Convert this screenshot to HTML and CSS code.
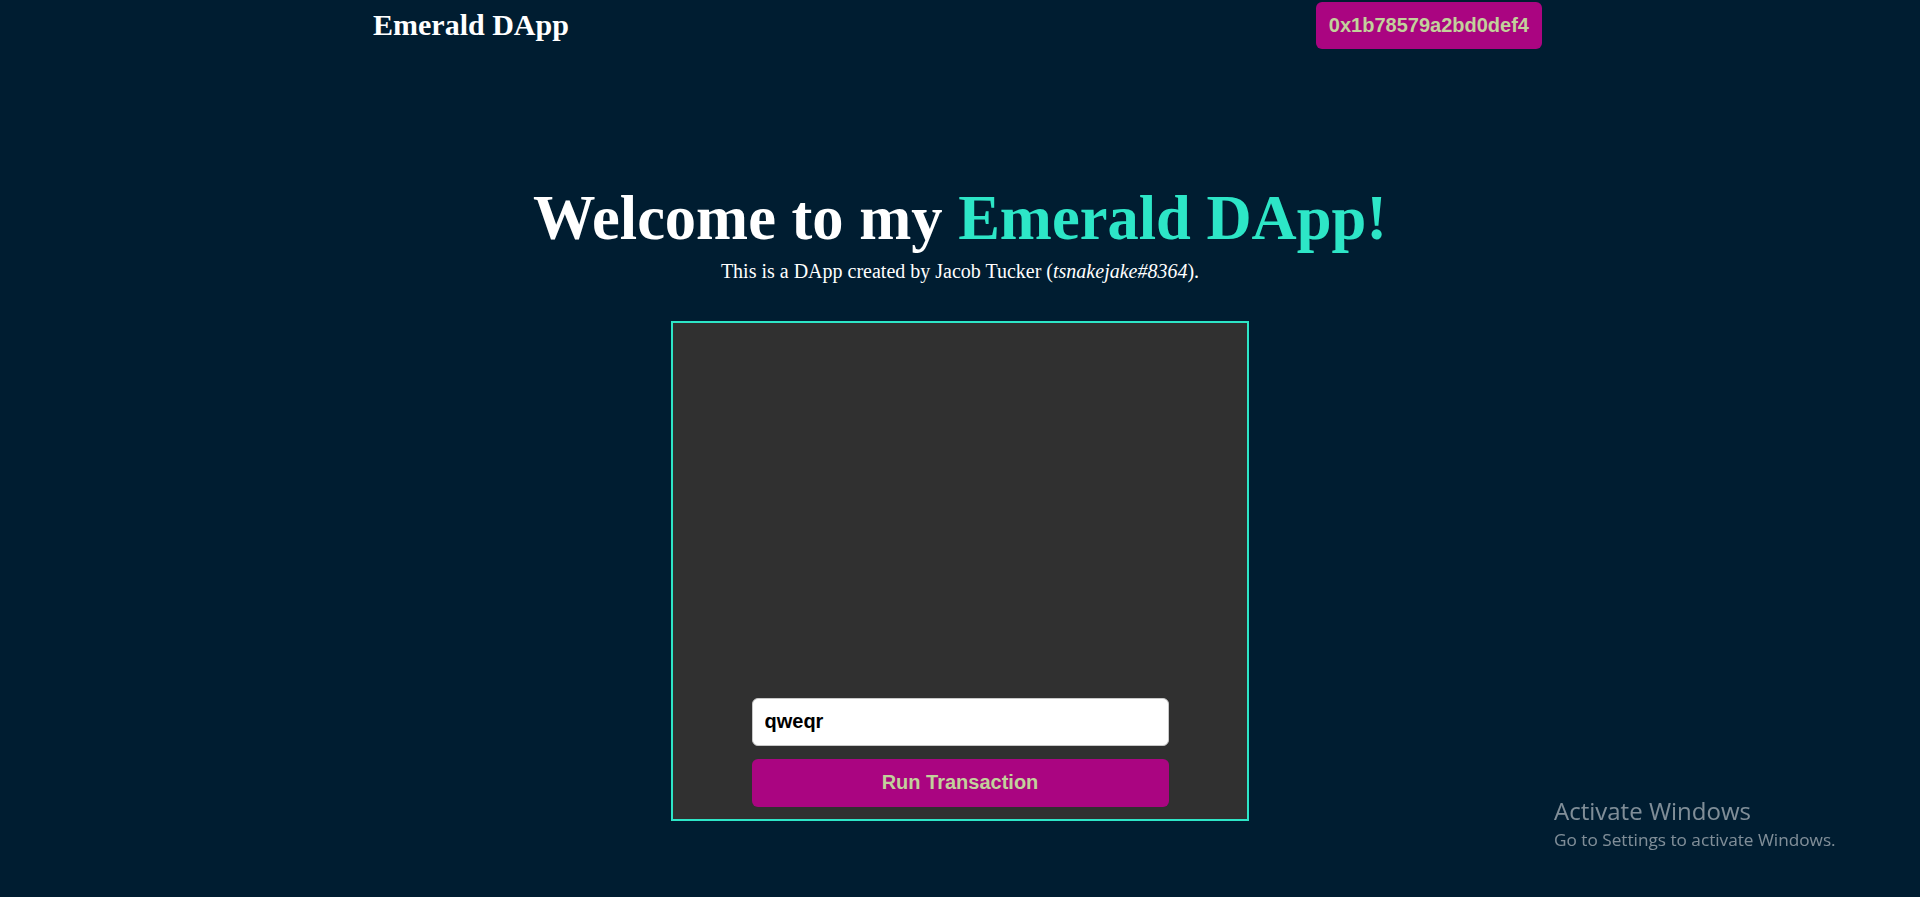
FILE: index.html
```html
<!DOCTYPE html>
<html lang="en">
<head>
<meta charset="utf-8">
<title>Emerald DApp</title>
<link rel="stylesheet" href="styles.css">
</head>
<body>
  <nav class="nav">
    <h1 class="brand">Emerald DApp</h1>
    <button class="address">0x1b78579a2bd0def4</button>
  </nav>
  <main class="main">
    <h1 class="title">Welcome to my <span class="accent">Emerald DApp!</span></h1>
    <p class="subtitle">This is a DApp created by Jacob Tucker (<i>tsnakejake#8364</i>).</p>
    <section class="card">
      <input class="field" type="text" value="qweqr">
      <button class="run">Run Transaction</button>
    </section>
  </main>
  <div class="watermark">
    <div class="wm-title">Activate Windows</div>
    <div class="wm-sub">Go to Settings to activate Windows.</div>
  </div>
</body>
</html>
```

FILE: styles.css
```css
html, body {
  margin: 0;
  padding: 0;
  background: #001d31;
  height: 100%;
  overflow: hidden;
}

body {
  font-family: "Liberation Serif", "Times New Roman", serif;
  color: #ffffff;
}

.nav {
  width: 1170px;
  margin: 0 auto;
  padding-top: 2px;
  display: flex;
  justify-content: space-between;
  align-items: center;
  box-sizing: border-box;
  padding-right: 3px;
}

.brand {
  margin: 0 0 0 -2px;
  font-size: 30px;
  line-height: 1.15;
  font-weight: bold;
  color: #ffffff;
}

.address {
  font-family: "Liberation Sans", Arial, sans-serif;
  font-weight: bold;
  font-size: 20px;
  line-height: 23px;
  padding: 12px 13px;
  border: none;
  border-radius: 6px;
  background: #aa0581;
  color: #c2d19b;
}

.main {
  padding-top: 134px;
  display: flex;
  flex-direction: column;
  align-items: center;
}

.title {
  margin: 0;
  font-size: 62.5px;
  line-height: 1.15;
  font-weight: bold;
  text-align: center;
}

.accent {
  color: #2de6c7;
}

.subtitle {
  margin: 5px 0 0;
  font-size: 20px;
  line-height: 1.15;
  text-align: center;
}

.card {
  margin-top: 38px;
  width: 578px;
  height: 500px;
  box-sizing: border-box;
  border: 2px solid #2de6c7;
  background: #303030;
  display: flex;
  flex-direction: column;
  justify-content: flex-end;
  align-items: center;
  padding-bottom: 12px;
}

.field {
  width: 417px;
  height: 48px;
  box-sizing: border-box;
  border: 1px solid #c8c8c8;
  border-radius: 6px;
  background: #ffffff;
  padding: 0 12px;
  font-family: "Liberation Sans", Arial, sans-serif;
  font-weight: bold;
  font-size: 20px;
  color: #000000;
  outline: none;
}

.run {
  margin-top: 13px;
  width: 417px;
  height: 48px;
  border: none;
  border-radius: 6px;
  background: #aa0581;
  color: #c2d19b;
  font-family: "Liberation Sans", Arial, sans-serif;
  font-weight: bold;
  font-size: 20px;
}

.watermark {
  position: fixed;
  left: 1554px;
  top: 795px;
  font-family: "Open Sans", "Noto Sans", sans-serif;
  color: rgba(255, 255, 255, 0.5);
}

.wm-title {
  font-size: 24px;
  line-height: 32px;
}

.wm-sub {
  margin-top: 2px;
  font-size: 17.2px;
  line-height: 22px;
}
```
